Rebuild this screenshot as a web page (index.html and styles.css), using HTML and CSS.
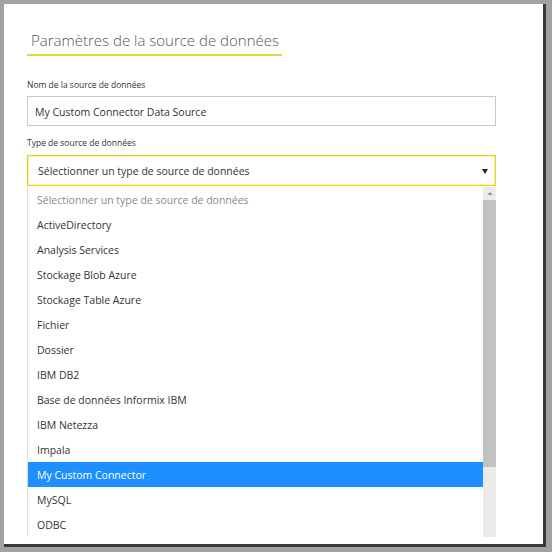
FILE: index.html
```html
<!DOCTYPE html>
<html lang="fr">
<head>
<meta charset="utf-8">
<link rel="stylesheet" href="styles.css">
</head>
<body>
<div class="window">
  <div class="dialog">
    <h1 class="title">Paramètres de la source de données</h1>
    <div class="field-label">Nom de la source de données</div>
    <div class="input">My Custom Connector Data Source</div>
    <div class="field-label second">Type de source de données</div>
    <div class="select">
      <span>Sélectionner un type de source de données</span>
      <span class="caret"></span>
    </div>
    <div class="dropdown">
      <ul class="options">
        <li class="placeholder">Sélectionner un type de source de données</li>
        <li>ActiveDirectory</li>
        <li>Analysis Services</li>
        <li>Stockage Blob Azure</li>
        <li>Stockage Table Azure</li>
        <li>Fichier</li>
        <li>Dossier</li>
        <li>IBM DB2</li>
        <li>Base de données Informix IBM</li>
        <li>IBM Netezza</li>
        <li>Impala</li>
        <li class="selected">My Custom Connector</li>
        <li>MySQL</li>
        <li>ODBC</li>
      </ul>
      <div class="scrollbar">
        <div class="scroll-up"><span class="up-arrow"></span></div>
        <div class="thumb"></div>
        <div class="track"></div>
      </div>
    </div>
  </div>
</div>
</body>
</html>
```
FILE: styles.css
```css
* { box-sizing: border-box; }
html, body { margin: 0; padding: 0; }
body {
  width: 552px;
  height: 552px;
  background: #a2a2a2;
  font-family: "Open Sans", "Noto Sans", sans-serif;
  color: #333;
  overflow: hidden;
}
.window {
  padding: 4px 0 0 4px;
}
.dialog {
  width: 542px;
  height: 543px;
  background: #fff;
  border-right: 3px solid #3a3a3a;
  border-bottom: 3px solid #3a3a3a;
  padding: 25px 46px 0 23px;
  display: flex;
  flex-direction: column;
  align-items: flex-start;
  overflow: hidden;
}
.title {
  margin: 0;
  font-size: 15px;
  font-weight: 300;
  line-height: 22px;
  color: #555;
  padding: 0 3px 3px 4px;
  border-bottom: 2px solid #e9d33f;
}
.field-label {
  margin-top: 23px;
  font-size: 8.5px;
  line-height: 12px;
  color: #333;
}
.field-label.second { margin-top: 11px; }
.input {
  margin-top: 5px;
  width: 469px;
  height: 30px;
  border: 1px solid #c8c8c8;
  padding: 1px 7px 0;
  font-size: 10.5px;
  line-height: 28px;
  color: #333;
}
.select {
  margin-top: 6px;
  width: 469px;
  height: 31px;
  border: 1px solid #e8d21c;
  box-shadow: inset 0 0 0 0.5px #f3e46a;
  padding: 2px 7px 0 10px;
  font-size: 10.5px;
  line-height: 27px;
  color: #333;
  display: flex;
  justify-content: space-between;
  align-items: center;
}
.caret {
  width: 0;
  height: 0;
  border-left: 3px solid transparent;
  border-right: 3px solid transparent;
  border-top: 5px solid #222;
  margin-top: -1px;
}
.dropdown {
  margin-top: 1px;
  width: 469px;
  display: flex;
  border-left: 1px solid #dcdcdc;
}
.options {
  list-style: none;
  margin: 0;
  padding: 0;
  flex: 1;
}
.options li {
  height: 25px;
  line-height: 24px;
  padding: 1px 0 0 9px;
  font-size: 10.5px;
  color: #333;
}
.options li.placeholder { color: #8a8a8a; }
.options li.selected {
  background: #1e8fff;
  color: #fff;
}
.scrollbar {
  width: 13px;
  background: #ebebeb;
  display: flex;
  flex-direction: column;
}
.scroll-up {
  height: 13px;
  display: flex;
  justify-content: center;
  align-items: center;
}
.up-arrow {
  width: 0;
  height: 0;
  border-left: 3px solid transparent;
  border-right: 3px solid transparent;
  border-bottom: 3px solid #9a9a9a;
}
.thumb {
  height: 267px;
  background: #c2c2c2;
}
.track { flex: 1; }
```
